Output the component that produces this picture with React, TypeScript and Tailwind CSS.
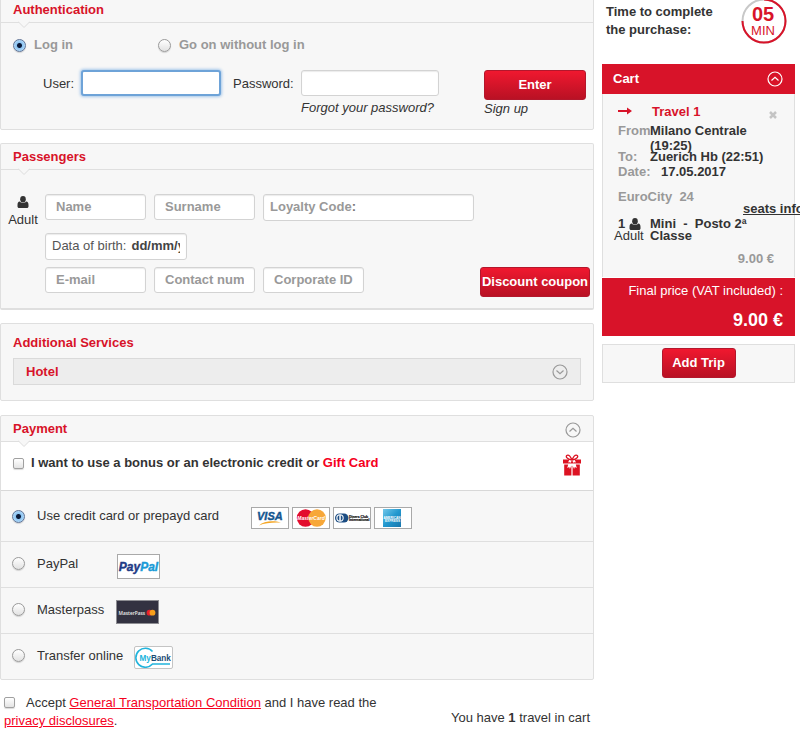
import { useState } from 'react';
import type { ReactNode } from 'react';

interface PanelProps {
  title?: string;
  icon?: ReactNode;
  className?: string;
  children: ReactNode;
}

const redButton =
  'rounded-[3px] border border-[#b3172c] bg-linear-to-b from-[#f0182f] to-[#b91124] text-center font-bold text-white';

const textInput =
  'rounded-[3px] border border-[#d3d3d3] bg-white shadow-[inset_0_1px_1px_rgba(0,0,0,0.08)] outline-none';

const passengerInput = `${textInput} h-[26px] w-[101px] px-[10px] pb-[2px] font-bold placeholder:text-[#999] placeholder:opacity-100`;

const radio =
  'size-[13px] shrink-0 appearance-none rounded-full border border-[#9a9a9a] bg-linear-to-b from-white to-[#e2e2e2] shadow-[0_1px_1px_rgba(0,0,0,0.15)] checked:border-[#5f7396] checked:bg-[radial-gradient(circle,#0b1a38_0_2px,#8cc4f2_3px,#b5dbf8_6px)]';

const checkbox =
  'size-[11px] shrink-0 appearance-none rounded-[2px] border border-[#a0a0a0] bg-linear-to-b from-white to-[#e4e4e4] shadow-[0_1px_1px_rgba(0,0,0,0.15)] checked:bg-[#6aa7e0]';

const UserIcon = () => (
  <svg viewBox="0 0 12 12" className="size-3" fill="currentColor" aria-hidden="true">
    <ellipse cx="6" cy="3.2" rx="2.8" ry="3.2" />
    <path d="M2.8 5.6C1.200 5.800.5 7 .5 8.900v1.500c0 .9.7 1.500 1.600 1.500h7.800c.9 0 1.600-.6 1.600-1.500V8.900c0-1.900-.7-3.100-2.300-3.300C8.300 6.600 7.200 7 6 7S3.700 6.600 2.800 5.600z" />
  </svg>
);

const CircleChevron = ({ up = false }: { up?: boolean }) => (
  <svg viewBox="0 0 16 16" className="size-4" fill="none" stroke="currentColor" strokeWidth="1.2" aria-hidden="true">
    <circle cx="8" cy="8" r="7" />
    {up ? <path d="M4.500 9.500 8 6.200l3.500 3.300" /> : <path d="M4.500 6.500 8 9.800l3.500-3.300" />}
  </svg>
);

const GiftIcon = () => (
  <svg viewBox="0 0 18 22" className="h-[22px] w-[18px]" aria-hidden="true">
    <path
      d="M9 6C7.500 2.500 5.500.8 4.100 1.300 2.400 2 3.200 5.300 9 6zm0 0c1.500-3.500 3.500-5.200 4.900-4.700C15.600 2 14.800 5.300 9 6z"
      fill="none"
      stroke="#dc1222"
      strokeWidth="1.3"
    />
    <path
      d="M0 5.500h6.500L5 8.500l1.600-.6.400 1.300L9 6.500l2 2.700.4-1.300 1.600.6-1.500-3H18v4H0z"
      fill="#dc1222"
    />
    <path d="M1.200 10.500h4L4.200 14l2-1 .7 2 1.500-3.500v10H1.200zM16.800 10.500h-4l1 3.500-2-1-.7 2-1.500-3.500v10h7.200z" fill="#dc1222" />
  </svg>
);

const Timer = () => (
  <svg viewBox="0 0 46 46" className="size-[46px] font-['Liberation_Sans',Arial,sans-serif]">
    <circle cx="23" cy="23" r="21.500" fill="none" stroke="#c8c8c8" strokeWidth="2" />
    <path d="M23 1.500A21.500 21.500 0 1 1 1.500 23" fill="none" stroke="#d81329" strokeWidth="2" />
    <text x="22" y="23" textAnchor="middle" fontSize="20" fontWeight="700" fill="#d81329">05</text>
    <text x="22" y="37" textAnchor="middle" fontSize="13" fill="#d81329">MIN</text>
  </svg>
);

const cardLogo = "h-[22px] w-[38px] border border-[#a9a9a9] bg-white font-['Liberation_Sans',Arial,sans-serif]";

const VisaLogo = () => (
  <svg viewBox="0 0 36 20" className={cardLogo} role="img" aria-label="Visa">
    <text x="5" y="12" fontSize="11" fontWeight="700" fontStyle="italic" fill="#14568f" stroke="#14568f" strokeWidth="0.4">VISA</text>
    <path d="M7 17.500c5-5 15-5 22-3-8-.3-16 0-22 3z" fill="#f5a623" />
  </svg>
);

const MasterCardLogo = () => (
  <svg viewBox="0 0 36 20" className={cardLogo} role="img" aria-label="MasterCard">
    <circle cx="12.500" cy="10" r="8.700" fill="#e30d2d" />
    <circle cx="24" cy="10" r="8.700" fill="#f7a738" />
    <text x="18" y="12" textAnchor="middle" fontSize="5" fontWeight="700" fontStyle="italic" fill="#fff">MasterCard</text>
  </svg>
);

const DinersLogo = () => (
  <svg viewBox="0 0 36 20" className={cardLogo} role="img" aria-label="Diners Club International">
    <rect x="1" y="5.500" width="13.500" height="9" rx="4.500" fill="#1c4d83" />
    <circle cx="6" cy="10" r="3.700" fill="#fff" />
    <path d="M5.300 7.200v5.600a3 3 0 0 1 0-5.600zM6.800 7.200v5.600a3 3 0 0 0 0-5.600z" fill="#1c4d83" />
    <text x="15" y="9.500" fontSize="3.400" fontWeight="700" fill="#111" stroke="#111" strokeWidth="0.2">Diners Club</text>
    <text x="15" y="13" fontSize="3.400" fontWeight="700" fill="#111" stroke="#111" strokeWidth="0.2">International</text>
  </svg>
);

const AmexLogo = () => (
  <svg viewBox="0 0 36 20" className={cardLogo} role="img" aria-label="American Express">
    <defs>
      <linearGradient id="amex" x1="0" y1="0" x2="1" y2="1">
        <stop offset="0" stopColor="#73c8ea" />
        <stop offset="0.500" stopColor="#2298cf" />
        <stop offset="1" stopColor="#1976ac" />
      </linearGradient>
    </defs>
    <rect x="8" y="1" width="18" height="18" fill="url(#amex)" />
    <text x="17" y="10.500" textAnchor="middle" fontSize="3.200" fontWeight="700" fill="#fff">AMERICAN</text>
    <text x="17.500" y="14" textAnchor="middle" fontSize="3.200" fontWeight="700" fill="#fff">EXPRESS</text>
  </svg>
);

const PayPalLogo = () => (
  <svg
    viewBox="0 0 41 23"
    className="h-[25px] w-[43px] border border-[#a9a9a9] bg-white font-['Liberation_Sans',Arial,sans-serif]"
    role="img"
    aria-label="PayPal"
  >
    <text x="20.500" y="16" textAnchor="middle" fontSize="12" fontWeight="700" fontStyle="italic" fill="#1f3b86" stroke="#1f3b86" strokeWidth="0.400">
      Pay<tspan fill="#1a9bd7" stroke="#1a9bd7">Pal</tspan>
    </text>
  </svg>
);

const MasterpassLogo = () => (
  <svg
    viewBox="0 0 41 22"
    className="h-6 w-[43px] border border-[#8d8d92] bg-[#333241] font-['Open_Sans',sans-serif]"
    role="img"
    aria-label="MasterPass"
  >
    <text x="1.500" y="13.500" fontSize="4.800" fontWeight="600" fill="#eee">MasterPass</text>
    <circle cx="32.500" cy="11.700" r="2.900" fill="#e8202c" />
    <circle cx="35.500" cy="11.700" r="2.900" fill="#f79e1b" />
  </svg>
);

const MyBankLogo = () => (
  <svg
    viewBox="0 0 37 21"
    className="h-[23px] w-[39px] rounded-[2px] border border-[#c4c4c4] bg-white font-['Liberation_Sans',Arial,sans-serif]"
    role="img"
    aria-label="MyBank"
  >
    <path d="M17.500 4.500A9.500 9.500 0 1 0 17.500 17H35" fill="none" stroke="#22b4dc" strokeWidth="1.600" />
    <text x="4.500" y="13.500" fontSize="8.200" fontWeight="700" fill="#22b4dc">
      My<tspan fill="#1c4c74">Bank</tspan>
    </text>
  </svg>
);

const Panel = ({ title, icon, className = '', children }: PanelProps) => (
  <section className={`rounded-[2px] border border-[#dfdfdf] bg-[#f7f7f7] ${className}`}>
    {title && (
      <div className="relative flex h-[26px] items-center justify-between border-b border-[#dfdfdf] px-3">
        <h2 className="font-bold text-[#d81329]">{title}</h2>
        {icon}
        <svg viewBox="0 0 12 7" className="absolute top-6 left-[17px] h-[7px] w-3" aria-hidden="true">
          <path d="M0 .5 6 6.500 12 .5" fill="#f7f7f7" stroke="#dcdcdc" />
        </svg>
      </div>
    )}
    {children}
  </section>
);

const Authentication = () => {
  const [mode, setMode] = useState<string>('login');

  return (
    <Panel title="Authentication" className="-mt-1 pb-[11px]">
      <div className="flex items-center pt-[13px] pl-3 font-bold text-[#999]">
        <label className="flex w-[145px] items-center gap-2">
          <input type="radio" name="mode" className={radio} checked={mode === 'login'} onChange={() => setMode('login')} />
          Log in
        </label>
        <label className="flex items-center gap-2">
          <input type="radio" name="mode" className={radio} checked={mode === 'guest'} onChange={() => setMode('guest')} />
          Go on without log in
        </label>
      </div>
      <form className="flex items-start pt-4 pr-[7px] pl-[42px]" onSubmit={(e) => e.preventDefault()}>
        <label htmlFor="user" className="w-[38px] pt-[5px]">User:</label>
        <input
          id="user"
          type="text"
          className="h-[26px] w-[140px] rounded-[3px] border-2 border-[#6ea3d8] bg-white px-2 shadow-[0_0_3px_1px_#a5c7ea] outline-none"
        />
        <label htmlFor="password" className="w-20 pt-[5px] pl-3">Password:</label>
        <div className="flex flex-col items-start">
          <input id="password" type="password" className={`${textInput} h-[26px] w-[138px] px-2`} />
          <a href="#" className="pt-[3px] italic">Forgot your password?</a>
        </div>
        <div className="ml-auto flex w-[102px] flex-col items-start">
          <button type="submit" className={`${redButton} h-[30px] w-full`}>Enter</button>
          <a href="#" className="italic">Sign up</a>
        </div>
      </form>
    </Panel>
  );
};

const Passengers = () => (
  <Panel title="Passengers" className="mt-[13px] border-b-2 pb-[11px]">
    <div className="flex pt-[24px] pr-[3px]">
      <div className="flex w-11 flex-col items-center gap-[3px] pt-[2px]">
        <UserIcon />
        <span>Adult</span>
      </div>
      <div className="flex-1">
        <div className="flex gap-2">
          <input type="text" aria-label="Name" placeholder="Name" className={passengerInput} />
          <input type="text" aria-label="Surname" placeholder="Surname" className={passengerInput} />
          <div className={`${textInput} flex h-[27px] w-[211px] items-center px-[6px] pb-px`}>
            <label htmlFor="loyalty" className="shrink-0 font-bold text-[#999]">
              Loyalty Code<span className="text-[#777]">:</span>
            </label>
            <input id="loyalty" type="text" className="w-full min-w-0 pl-1 outline-none" />
          </div>
        </div>
        <div className={`${textInput} mt-3 flex h-[27px] w-[142px] items-center gap-[5px] px-[6px] pb-px text-[#555]`}>
          <label htmlFor="birth" className="shrink-0">Data of birth:</label>
          <input
            id="birth"
            type="text"
            placeholder="dd/mm/yyyy"
            className="w-full min-w-0 font-bold outline-none placeholder:text-[#444] placeholder:opacity-100"
          />
        </div>
        <div className="mt-[7px] flex items-start gap-2">
          <input type="text" aria-label="E-mail" placeholder="E-mail" className={passengerInput} />
          <input type="text" aria-label="Contact number" placeholder="Contact number" className={passengerInput} />
          <input type="text" aria-label="Corporate ID" placeholder="Corporate ID" className={passengerInput} />
          <button type="button" className={`${redButton} ml-auto h-[30px] w-[110px] whitespace-nowrap`}>
            Discount coupon
          </button>
        </div>
      </div>
    </div>
  </Panel>
);

const AdditionalServices = () => (
  <Panel className="mt-[13px] px-3 pt-[10px] pb-[15px]">
    <h2 className="font-bold text-[#d81329]">Additional Services</h2>
    <button
      type="button"
      className="mt-[6px] flex h-[27px] w-full items-center justify-between border border-[#dadada] bg-[#ededed] px-3 font-bold text-[#d81329]"
    >
      Hotel
      <span className="text-[#999]"><CircleChevron /></span>
    </button>
  </Panel>
);

const methods = [
  { id: 'paypal', label: 'PayPal', labelClass: 'w-[80px]', logo: <PayPalLogo /> },
  { id: 'masterpass', label: 'Masterpass', labelClass: 'w-[79px]', logo: <MasterpassLogo /> },
  { id: 'transfer', label: 'Transfer online', labelClass: 'w-[97px]', logo: <MyBankLogo /> },
];

const Payment = () => {
  const [method, setMethod] = useState<string>('card');

  return (
    <Panel
      title="Payment"
      className="mt-[14px]"
      icon={<button type="button" aria-label="Collapse payment" className="pt-[2px] text-[#999]"><CircleChevron up /></button>}
    >
      <div className="flex h-12 items-start justify-between bg-white pt-[12px] pr-3 pl-3">
        <div className="flex items-center gap-[7px] font-bold">
          <input id="bonus" type="checkbox" className={checkbox} />
          <label htmlFor="bonus">
            I want to use a bonus or an electronic credit or{' '}
            <a href="#" className="text-[#f5001d]">Gift Card</a>
          </label>
        </div>
        <GiftIcon />
      </div>
      <div className="flex h-[51px] items-start border-t border-[#d8d8d8] pt-4 pl-[11px]">
        <label className="flex w-[239px] items-center gap-3">
          <input type="radio" name="method" className={radio} checked={method === 'card'} onChange={() => setMethod('card')} />
          Use credit card or prepayd card
        </label>
        <div className="flex gap-[3px]">
          <VisaLogo />
          <MasterCardLogo />
          <DinersLogo />
          <AmexLogo />
        </div>
      </div>
      {methods.map(({ id, label, labelClass, logo }) => (
        <div key={id} className="flex h-[46px] items-start border-t border-[#dfdfdf] pl-[11px]">
          <input
            id={id}
            type="radio"
            name="method"
            className={`${radio} mt-[15px] mr-3`}
            checked={method === id}
            onChange={() => setMethod(id)}
          />
          <label htmlFor={id} className={`${labelClass} pt-[13px]`}>{label}</label>
          <div className="pt-3">{logo}</div>
        </div>
      ))}
    </Panel>
  );
};

const Footer = () => (
  <footer className="px-1 pt-[14px]">
    <div className="flex items-start justify-between">
      <p className="w-[400px]">
        <input id="accept" type="checkbox" className={`${checkbox} mr-[11px] align-[-1px]`} />
        <label htmlFor="accept">Accept </label>
        <a href="#" className="text-[#f5001d] underline">General Transportation Condition</a> and I have read the{' '}
        <a href="#" className="text-[#f5001d] underline">privacy disclosures</a>.
      </p>
      <p className="pt-[15px]">You have <b>1</b> travel in cart</p>
    </div>
    <div className="flex justify-between pt-2 pr-[2px]">
      <button type="button" aria-label="Back" className="h-[30px] w-[50px] rounded-[3px] border border-[#d3d3d3] bg-[#f2f2f2]" />
      <button type="button" aria-label="Continue" className={`${redButton} h-[30px] w-[102px]`} />
    </div>
  </footer>
);

const Cart = () => (
  <aside className="w-[193px] shrink-0">
    <div className="flex h-16 items-start justify-between pr-2 pl-1">
      <p className="pt-[3px] font-bold">
        Time to complete
        <br />
        the purchase:
      </p>
      <div className="-mt-[2px]"><Timer /></div>
    </div>
    <div className="flex h-[30px] items-center justify-between bg-[#d81329] pr-3 pl-[11px] font-bold text-white">
      <h2>Cart</h2>
      <button type="button" aria-label="Collapse cart"><CircleChevron up /></button>
    </div>
    <div className="border-x border-[#dfdfdf] bg-[#f7f7f7] pt-[9px] pb-[11px] pl-[15px] font-bold leading-[15px]">
      <div className="flex items-start pr-[17px] text-[#d81329]">
        <svg viewBox="0 0 14 8" className="mt-1 h-2 w-[14px]" fill="currentColor" aria-hidden="true">
          <path d="M0 3h9V.5L14 4 9 7.500V5H0z" />
        </svg>
        <h3 className="pt-px pl-5">Travel 1</h3>
        <button type="button" aria-label="Remove travel" className="mt-2 ml-auto text-[#c4c4c4]">
          <svg viewBox="0 0 8 8" className="size-2" fill="none" stroke="currentColor" strokeWidth="2.500" aria-hidden="true">
            <path d="m1 1 6 6M7 1 1 7" />
          </svg>
        </button>
      </div>
      <dl className="pt-1">
        <div className="flex h-[26px]">
          <dt className="w-8 shrink-0 text-[#999]">From</dt>
          <dd className="w-[110px]">Milano Centrale (19:25)</dd>
        </div>
        <div className="flex">
          <dt className="w-8 shrink-0 text-[#999]">To:</dt>
          <dd className="whitespace-nowrap">Zuerich Hb (22:51)</dd>
        </div>
        <div className="flex">
          <dt className="w-[43px] shrink-0 text-[#999]">Date:</dt>
          <dd>17.05.2017</dd>
        </div>
      </dl>
      <p className="pt-[10px] text-[#999]">EuroCity&nbsp; 24</p>
      <a href="#" className="-mt-[3px] ml-[125px] block whitespace-nowrap underline">seats info</a>
      <div className="flex pt-[2px] leading-3">
        <div className="-ml-1 flex w-9 shrink-0 flex-col">
          <span className="flex items-center gap-1 pl-1">1 <UserIcon /></span>
          <span className="font-normal">Adult</span>
        </div>
        <p className="w-[110px]">Mini&nbsp; -&nbsp; Posto 2ª Classe</p>
      </div>
      <p className="pt-[9px] pr-5 text-right text-[#999]">9.00 €</p>
    </div>
    <div className="mt-px bg-[#d81329] pt-1 pr-3 pb-[6px] text-right text-white">
      <p>Final price (VAT included) :</p>
      <p className="pt-[10px] text-[18px] leading-5 font-bold">9.00 €</p>
    </div>
    <div className="mt-2 flex h-[39px] items-start justify-center border border-[#dfdfdf] bg-[#f7f7f7] pt-[3px]">
      <button type="button" className={`${redButton} h-[30px] w-[74px]`}>Add Trip</button>
    </div>
  </aside>
);

const App = () => (
  <div className="flex h-screen gap-2 overflow-hidden bg-white pr-[5px] font-['Liberation_Sans',Arial,sans-serif] text-[13px] leading-[18px] text-[#333]">
    <main className="min-w-0 flex-1">
      <Authentication />
      <Passengers />
      <AdditionalServices />
      <Payment />
      <Footer />
    </main>
    <Cart />
  </div>
);

export default App;
